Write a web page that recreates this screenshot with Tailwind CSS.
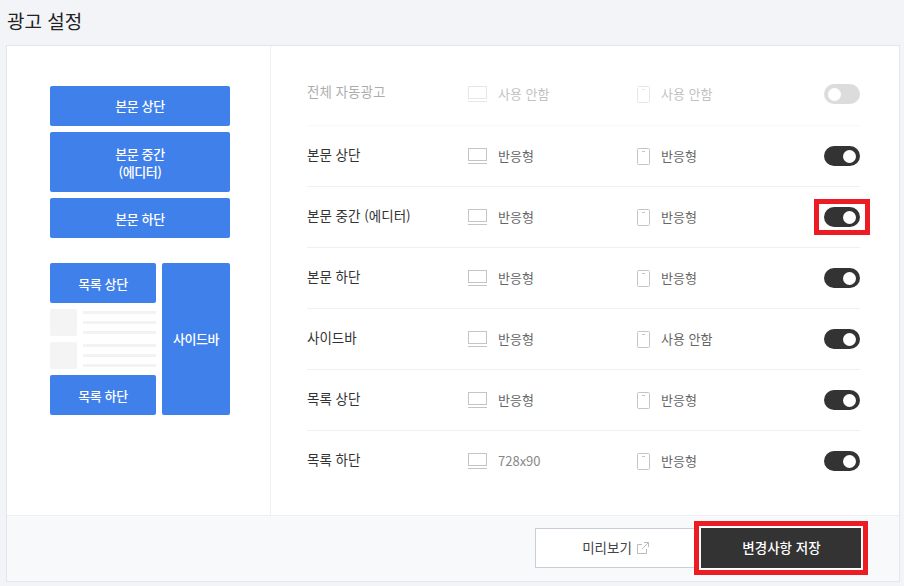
<!DOCTYPE html>
<html lang="ko">
<head>
    <meta charset="UTF-8">
    <title>광고 설정</title>
    <script src="https://cdn.jsdelivr.net/npm/@tailwindcss/browser@4"></script>
</head>
<body class="bg-[#f3f4f7] text-[#333] font-['Noto_Sans_CJK_KR','Noto_Sans',sans-serif] overflow-hidden">
    <svg class="hidden">
        <symbol id="monitor" viewBox="0 0 19 16">
            <rect x="0.5" y="0.5" width="18" height="12" fill="none" stroke="#c4c4c4"/>
            <path d="M0 15.5H19" stroke="#c4c4c4"/>
        </symbol>
        <symbol id="tablet" viewBox="0 0 13 17">
            <rect x="0.5" y="0.5" width="12" height="16" rx="1" fill="none" stroke="#c4c4c4"/>
            <path d="M5 3.5H8" stroke="#c4c4c4"/>
        </symbol>
    </svg>

    <div class="w-[904px] h-[586px] pl-[6px] pt-[8px]">
        <h1 class="h-[37px] text-[19px] leading-[26px] text-[#222] pl-px">광고 설정</h1>
        <div class="w-[894px] border border-[#e3e6ec] bg-white">
            <div class="flex h-[469px]">
                <!-- Ad position map -->
                <div class="w-[264px] border-r border-[#f0f0f0] pl-[43px] pt-[40px] text-[13px] font-medium tracking-[-0.4px] text-white text-center">
                    <div class="flex flex-col gap-[6px] w-[180px]">
                        <div class="h-[40px] bg-[#3f80ea] rounded-[2px] flex items-center justify-center">본문 상단</div>
                        <div class="h-[60px] pt-px bg-[#3f80ea] rounded-[2px] flex items-center justify-center leading-[18px]">본문 중간<br>(에디터)</div>
                        <div class="h-[40px] pt-px bg-[#3f80ea] rounded-[2px] flex items-center justify-center">본문 하단</div>
                    </div>
                    <div class="flex gap-[6px] w-[180px] mt-[25px]">
                        <div class="w-[106px] flex flex-col gap-[6px]">
                            <div class="h-[40px] pt-px bg-[#3f80ea] rounded-[2px] flex items-center justify-center">목록 상단</div>
                            <div class="flex gap-[6px] h-[27px]">
                                <div class="w-[27px] bg-[#f4f4f4] rounded-[2px]"></div>
                                <div class="flex-1 flex flex-col gap-[7px] pt-[2px]">
                                    <div class="h-[3px] bg-[#f3f3f3]"></div>
                                    <div class="h-[3px] bg-[#f3f3f3]"></div>
                                    <div class="h-[3px] bg-[#f3f3f3]"></div>
                                </div>
                            </div>
                            <div class="flex gap-[6px] h-[27px]">
                                <div class="w-[27px] bg-[#f4f4f4] rounded-[2px]"></div>
                                <div class="flex-1 flex flex-col gap-[7px] pt-[2px]">
                                    <div class="h-[3px] bg-[#f3f3f3]"></div>
                                    <div class="h-[3px] bg-[#f3f3f3]"></div>
                                    <div class="h-[3px] bg-[#f3f3f3]"></div>
                                </div>
                            </div>
                            <div class="h-[40px] pt-px bg-[#3f80ea] rounded-[2px] flex items-center justify-center">목록 하단</div>
                        </div>
                        <div class="w-[68px] bg-[#3f80ea] rounded-[2px] flex items-center justify-center">사이드바</div>
                    </div>
                </div>

                <!-- Settings rows -->
                <div class="w-[589px] pl-[36px] pt-[18px] text-[13px]">
                    <div class="flex items-center h-[62px] pb-px border-b border-[#f0f0f0] w-[553px] opacity-40">
                        <div class="w-[161px] pb-[6px] text-[13.5px]">전체 자동광고</div>
                        <div class="w-[169px] flex items-center gap-[11px] text-[#666]"><svg class="w-[19px] h-[16px]"><use href="#monitor"/></svg>사용 안함</div>
                        <div class="w-[187px] flex items-center gap-[11px] text-[#666]"><svg class="w-[13px] h-[17px]"><use href="#tablet"/></svg>사용 안함</div>
                        <div class="w-[36px] h-[20px] rounded-full bg-[#aaa] flex items-center justify-start pl-[4px]"><div class="w-[13px] h-[13px] rounded-full bg-white"></div></div>
                    </div>
                    <div class="flex items-center h-[61px] border-b border-[#f0f0f0] w-[553px]">
                        <div class="w-[161px] pb-[3px] text-[13.5px]">본문 상단</div>
                        <div class="w-[169px] flex items-center gap-[11px] text-[#666]"><svg class="w-[19px] h-[16px]"><use href="#monitor"/></svg>반응형</div>
                        <div class="w-[187px] flex items-center gap-[11px] text-[#666]"><svg class="w-[13px] h-[17px]"><use href="#tablet"/></svg>반응형</div>
                        <div class="w-[36px] h-[20px] rounded-full bg-[#333] flex items-center justify-end pr-[4px]"><div class="w-[13px] h-[13px] rounded-full bg-white"></div></div>
                    </div>
                    <div class="flex items-center h-[61px] border-b border-[#f0f0f0] w-[553px]">
                        <div class="w-[161px] pb-[3px] text-[13.5px]">본문 중간 (에디터)</div>
                        <div class="w-[169px] flex items-center gap-[11px] text-[#666]"><svg class="w-[19px] h-[16px]"><use href="#monitor"/></svg>반응형</div>
                        <div class="w-[187px] flex items-center gap-[11px] text-[#666]"><svg class="w-[13px] h-[17px]"><use href="#tablet"/></svg>반응형</div>
                        <div class="relative w-[36px] h-[20px] rounded-full bg-[#333] flex items-center justify-end pr-[4px]">
                            <div class="w-[13px] h-[13px] rounded-full bg-white"></div>
                            <div class="absolute -left-[10px] -right-[10px] -top-[8px] -bottom-[8px] border-[5px] border-[#ed1c24]"></div>
                        </div>
                    </div>
                    <div class="flex items-center h-[61px] border-b border-[#f0f0f0] w-[553px]">
                        <div class="w-[161px] pb-[3px] text-[13.5px]">본문 하단</div>
                        <div class="w-[169px] flex items-center gap-[11px] text-[#666]"><svg class="w-[19px] h-[16px]"><use href="#monitor"/></svg>반응형</div>
                        <div class="w-[187px] flex items-center gap-[11px] text-[#666]"><svg class="w-[13px] h-[17px]"><use href="#tablet"/></svg>반응형</div>
                        <div class="w-[36px] h-[20px] rounded-full bg-[#333] flex items-center justify-end pr-[4px]"><div class="w-[13px] h-[13px] rounded-full bg-white"></div></div>
                    </div>
                    <div class="flex items-center h-[61px] border-b border-[#f0f0f0] w-[553px]">
                        <div class="w-[161px] pb-[3px] text-[13.5px]">사이드바</div>
                        <div class="w-[169px] flex items-center gap-[11px] text-[#666]"><svg class="w-[19px] h-[16px]"><use href="#monitor"/></svg>반응형</div>
                        <div class="w-[187px] flex items-center gap-[11px] text-[#666]"><svg class="w-[13px] h-[17px]"><use href="#tablet"/></svg>사용 안함</div>
                        <div class="w-[36px] h-[20px] rounded-full bg-[#333] flex items-center justify-end pr-[4px]"><div class="w-[13px] h-[13px] rounded-full bg-white"></div></div>
                    </div>
                    <div class="flex items-center h-[61px] border-b border-[#f0f0f0] w-[553px]">
                        <div class="w-[161px] pb-[3px] text-[13.5px]">목록 상단</div>
                        <div class="w-[169px] flex items-center gap-[11px] text-[#666]"><svg class="w-[19px] h-[16px]"><use href="#monitor"/></svg>반응형</div>
                        <div class="w-[187px] flex items-center gap-[11px] text-[#666]"><svg class="w-[13px] h-[17px]"><use href="#tablet"/></svg>반응형</div>
                        <div class="w-[36px] h-[20px] rounded-full bg-[#333] flex items-center justify-end pr-[4px]"><div class="w-[13px] h-[13px] rounded-full bg-white"></div></div>
                    </div>
                    <div class="flex items-center h-[61px] border-b border-transparent w-[553px]">
                        <div class="w-[161px] pb-[3px] text-[13.5px]">목록 하단</div>
                        <div class="w-[169px] flex items-center gap-[11px] text-[#666]"><svg class="w-[19px] h-[16px]"><use href="#monitor"/></svg><span class="text-[#888]">728x90</span></div>
                        <div class="w-[187px] flex items-center gap-[11px] text-[#666]"><svg class="w-[13px] h-[17px]"><use href="#tablet"/></svg>반응형</div>
                        <div class="w-[36px] h-[20px] rounded-full bg-[#333] flex items-center justify-end pr-[4px]"><div class="w-[13px] h-[13px] rounded-full bg-white"></div></div>
                    </div>
                </div>
            </div>

            <!-- Footer -->
            <div class="h-[66px] pb-[2px] border-t border-[#eceef2] bg-[#f8f9fb] flex items-center justify-end gap-[6px] pr-[38px] text-[13.5px]">
                <button class="w-[160px] h-[40px] pl-px bg-white border border-[#c9ced8] flex items-center justify-center gap-[5px] text-[#444]">
                    미리보기
                    <svg class="w-[12px] h-[12px]" viewBox="0 0 12 12" fill="none" stroke="#bbb"><path d="M9.5 7V11.5H.5V2.5H5M7 .5H11.5V5M11.5 .5L5 7"/></svg>
                </button>
                <div class="relative">
                    <button class="w-[160px] h-[40px] pl-px bg-[#333] text-white font-medium flex items-center justify-center">변경사항 저장</button>
                    <div class="absolute -left-[7px] -right-[7px] -top-[7px] -bottom-[7px] border-[5px] border-[#ed1c24] shadow-[inset_0_0_0_2px_white]"></div>
                </div>
            </div>
        </div>
    </div>
</body>
</html>
